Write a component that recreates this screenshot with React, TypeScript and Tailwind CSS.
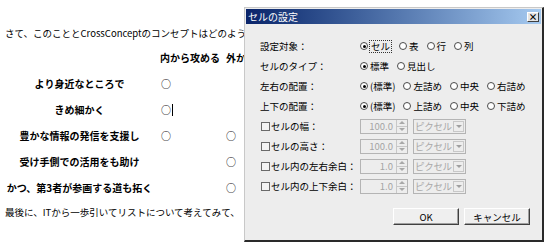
import React from 'react';

const Radio = ({ checked = false, label, focus = false }: { checked?: boolean; label: string; focus?: boolean }) => (
  <span className="flex items-center gap-[2px]">
    <span className="w-[8px] h-[8px] rounded-full border border-[#4a4a4a] bg-white flex items-center justify-center">
      {checked && <span className="w-[3px] h-[3px] rounded-full bg-black" />}
    </span>
    <span className={focus ? 'outline outline-1 outline-dotted outline-[#333] leading-[11px] px-[1px]' : ''}>{label}</span>
  </span>
);

const SpinBox = ({ value }: { value: string }) => (
  <div className="w-[48px] h-[15px] border border-[#b4b4b4] flex">
    <span className="flex-1 text-right pr-[3px] leading-[13px] text-[#a4a4a4]">{value}</span>
    <span className="w-[11px] border-l border-[#c8c8c8] flex flex-col">
      <span className="flex-1 flex items-center justify-center border-b border-[#c8c8c8]">
        <span className="w-0 h-0 border-l-[3px] border-r-[3px] border-b-[3px] border-l-transparent border-r-transparent border-b-[#a8a8a8]" />
      </span>
      <span className="flex-1 flex items-center justify-center">
        <span className="w-0 h-0 border-l-[3px] border-r-[3px] border-t-[3px] border-l-transparent border-r-transparent border-t-[#a8a8a8]" />
      </span>
    </span>
  </div>
);

const UnitSelect = () => (
  <div className="w-[53px] h-[15px] border border-[#b4b4b4] flex items-stretch overflow-hidden">
    <span className="flex-1 pl-[1px] leading-[13px] text-[#a8a8a8] whitespace-nowrap overflow-hidden tracking-[-0.3px]">ピクセル</span>
    <span className="w-[11px] shrink-0 m-[1px] border border-[#c8c8c8] flex items-center justify-center">
      <span className="w-0 h-0 border-l-[3px] border-r-[3px] border-t-[3px] border-l-transparent border-r-transparent border-t-[#a0a0a0]" />
    </span>
  </div>
);

const Row = ({ children }: { children: React.ReactNode }) => (
  <div className="h-[20px] flex items-center leading-[12px]">{children}</div>
);

const Label = ({ children }: { children: React.ReactNode }) => (
  <div className="w-[100px] shrink-0 whitespace-nowrap">{children}</div>
);

const SizeRow = ({ label, value }: { label: string; value: string }) => (
  <Row>
    <div className="w-[99px] shrink-0 flex items-center gap-[1px] ml-[1px] whitespace-nowrap">
      <span className="w-[9px] h-[9px] border border-[#6a6a6a] bg-[#f4f4f4]" />
      <span>{label}</span>
    </div>
    <div className="flex items-center gap-[5px]">
      <SpinBox value={value} />
      <UnitSelect />
    </div>
  </Row>
);

const Btn = ({ children }: { children: React.ReactNode }) => (
  <button className="w-[66px] h-[17px] bg-[#efefef] border-t border-l border-white border-r border-b border-r-[#404040] border-b-[#404040] shadow-[inset_-1px_-1px_0_#a0a0a0] leading-[14px] text-black">
    {children}
  </button>
);

export default function App() {
  return (
    <div className="relative w-[552px] h-[247px] bg-white overflow-hidden text-black font-['Noto_Sans_CJK_JP',sans-serif] text-[9.5px] leading-[12px]">
      {/* document behind the dialog, clipped where the dialog covers it */}
      <div className="w-[244px] overflow-hidden pt-[27px] pl-[5px]">
        <p className="h-[12px] leading-[12px] whitespace-nowrap">さて、このこととCrossConceptのコンセプトはどのように関係しているのでしょうか。</p>
        <div className="mt-[6px] grid grid-cols-[155px_66px_65px] auto-rows-[26px] items-center font-bold text-[10px] -ml-[3px]">
          <span />
          <span className="pl-[3px] whitespace-nowrap">内から攻める</span>
          <span className="pl-[3px] whitespace-nowrap">外から攻める</span>

          <span className="text-center">より身近なところで</span>
          <span className="pl-[4px] font-normal">○</span>
          <span />

          <span className="text-center">きめ細かく</span>
          <span className="pl-[4px] font-normal flex items-center">○<span className="ml-[1px] w-[1px] h-[12px] bg-black" /></span>
          <span />

          <span className="text-center">豊かな情報の発信を支援し</span>
          <span className="pl-[4px] font-normal">○</span>
          <span className="pl-[3px] font-normal">○</span>

          <span className="text-center">受け手側での活用をも助け</span>
          <span />
          <span className="pl-[3px] font-normal">○</span>

          <span className="text-center whitespace-nowrap">かつ、第3者が参画する道も拓く</span>
          <span />
          <span className="pl-[3px] font-normal">○</span>
        </div>
        <p className="mt-[5px] h-[12px] leading-[12px] whitespace-nowrap">最後に、ITから一歩引いてリストについて考えてみて、</p>
      </div>

      {/* セルの設定 dialog */}
      <div className="absolute left-[244px] top-[7px] w-[300px] h-[235px] bg-[#ededed] border-t border-l border-[#c8c8c8] border-r-2 border-b-2 border-r-[#2a2a2a] border-b-[#2a2a2a] flex flex-col">
        <div className="mx-[1px] mt-[1px] h-[15px] bg-gradient-to-r from-[#0a246a] to-[#a6caf0] flex items-center justify-between pl-[2px] pr-[2px]">
          <span className="text-white leading-[13px] text-[10px]">セルの設定</span>
          <span className="w-[12px] h-[10px] bg-[#e4e4e4] border-t border-l border-white border-r border-b border-r-[#404040] border-b-[#404040] flex items-center justify-center text-[9px] leading-[8px] font-bold">×</span>
        </div>

        <div className="pt-[12px] pl-[15px] flex flex-col">
          <Row>
            <Label>設定対象：</Label>
            <div className="flex items-center gap-[8px]">
              <Radio checked label="セル" focus />
              <Radio label="表" />
              <Radio label="行" />
              <Radio label="列" />
            </div>
          </Row>
          <Row>
            <Label>セルのタイプ：</Label>
            <div className="flex items-center gap-[8px]">
              <Radio checked label="標準" />
              <Radio label="見出し" />
            </div>
          </Row>
          <Row>
            <Label>左右の配置：</Label>
            <div className="flex items-center gap-[8px]">
              <Radio checked label="(標準)" />
              <Radio label="左詰め" />
              <Radio label="中央" />
              <Radio label="右詰め" />
            </div>
          </Row>
          <Row>
            <Label>上下の配置：</Label>
            <div className="flex items-center gap-[8px]">
              <Radio checked label="(標準)" />
              <Radio label="上詰め" />
              <Radio label="中央" />
              <Radio label="下詰め" />
            </div>
          </Row>
          <SizeRow label="セルの幅：" value="100.0" />
          <SizeRow label="セルの高さ：" value="100.0" />
          <SizeRow label="セル内の左右余白：" value="1.0" />
          <SizeRow label="セル内の上下余白：" value="1.0" />
        </div>

        <div className="mt-[12px] pr-[12px] flex justify-end gap-[5px]">
          <Btn>OK</Btn>
          <Btn>キャンセル</Btn>
        </div>
      </div>
    </div>
  );
}
